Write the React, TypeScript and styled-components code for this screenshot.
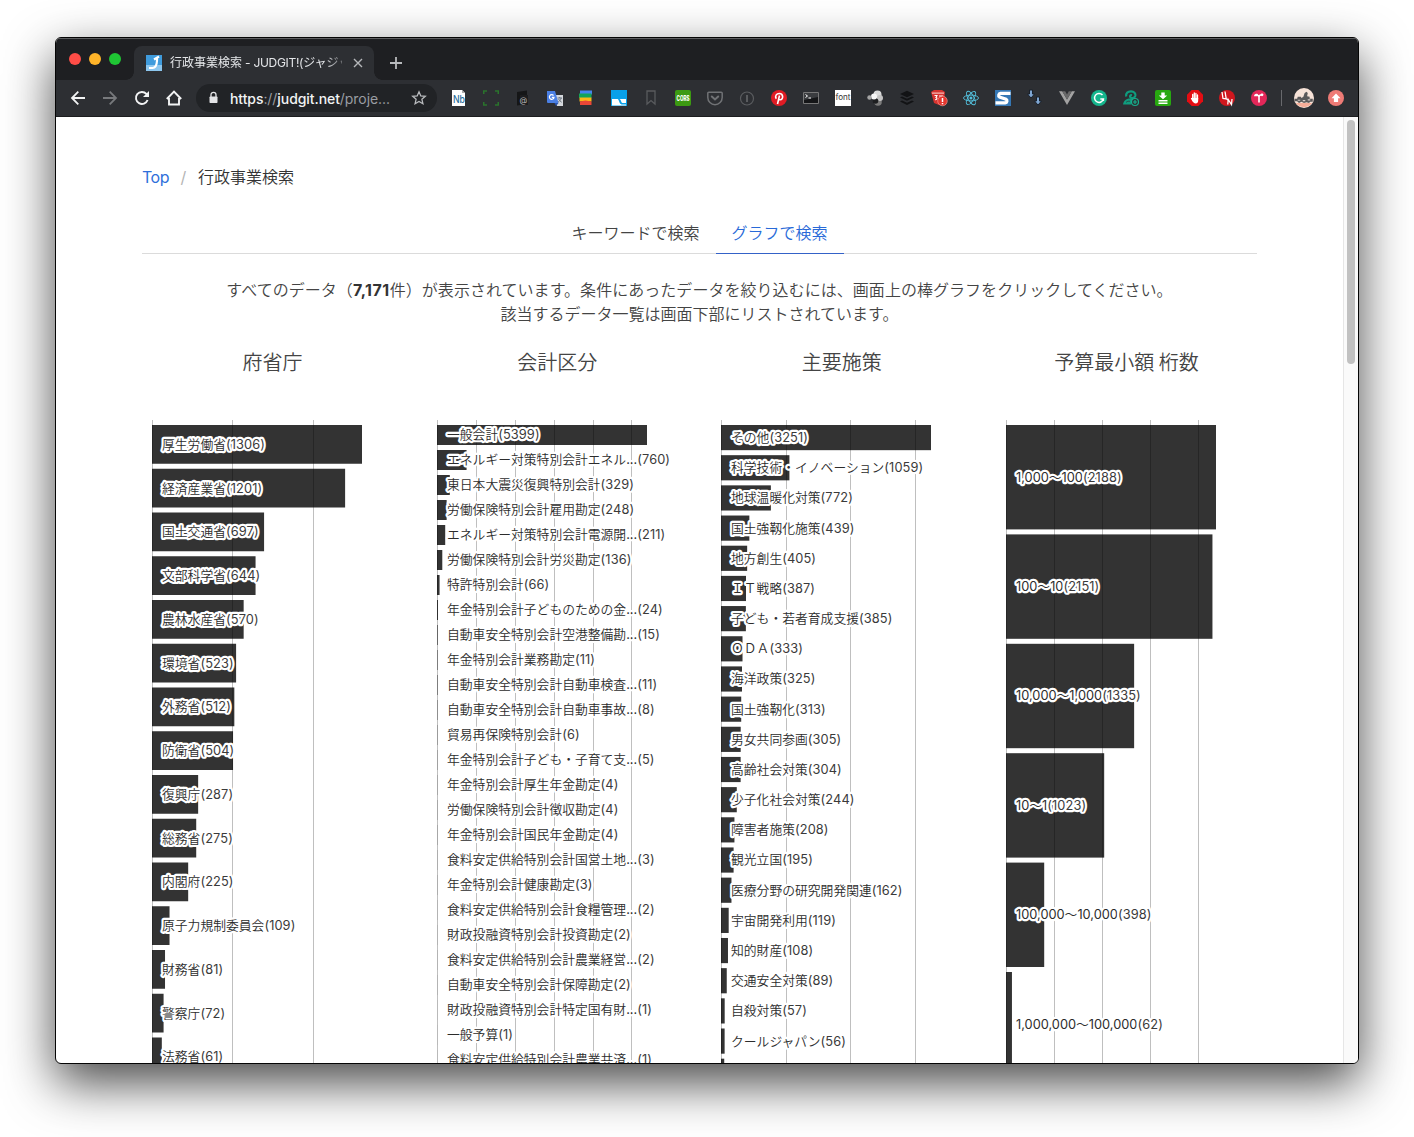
import React from "react";
import styled, { createGlobalStyle } from "styled-components";

const FONT = `Inter, "Noto Sans CJK JP DemiLight", "Noto Sans CJK JP Light", "Noto Sans CJK JP", sans-serif`;

const GlobalStyle = createGlobalStyle`
  *, *::before, *::after { box-sizing: border-box; }
  body { margin: 0; background: #fff; font-family: ${FONT}; }
`;

const Desktop = styled.div`
  width: 1414px;
  height: 1137px;
  padding: 37px 55px 73px;
  overflow: hidden;
  background: #fff;
`;

const Window = styled.div`
  height: 1027px;
  display: flex;
  flex-direction: column;
  border: 1px solid #050505;
  border-radius: 6px;
  overflow: hidden;
  background: #fff;
  box-shadow: 0 19px 50px rgba(0, 0, 0, 0.72);
`;

const TabStrip = styled.div`
  flex: none;
  height: 42px;
  display: flex;
  align-items: flex-end;
  background: #1e1f22;
  border-top: 1px solid #5d5e60;
`;

const TrafficLights = styled.div`
  display: flex;
  gap: 8px;
  padding: 0 13px 15px;
  width: 78px;
`;

const Light = styled.span<{ $color: string }>`
  width: 12px;
  height: 12px;
  border-radius: 50%;
  background: ${(p) => p.$color};
`;

const BrowserTab = styled.div`
  position: relative;
  width: 240px;
  height: 34px;
  display: flex;
  align-items: center;
  padding: 0 8px 0 12px;
  border-radius: 8px 8px 0 0;
  background: #2d2f33;
  &::before,
  &::after {
    content: "";
    position: absolute;
    bottom: 0;
    width: 8px;
    height: 8px;
  }
  &::before {
    left: -8px;
    background: radial-gradient(circle at 0 0, transparent 7.5px, #2d2f33 8px);
  }
  &::after {
    right: -8px;
    background: radial-gradient(circle at 100% 0, transparent 7.5px, #2d2f33 8px);
  }
`;

const TabTitle = styled.span`
  flex: 1;
  margin: 0 8px;
  overflow: hidden;
  white-space: nowrap;
  font-family: Inter, "Noto Sans CJK JP", sans-serif;
  font-size: 12px;
  line-height: 18px;
  color: #e4e6e9;
  mask-image: linear-gradient(to right, #000 155px, transparent 182px);
  span {
    letter-spacing: -0.3px;
  }
`;

const NewTab = styled.span`
  display: flex;
  padding: 0 0 10px 15px;
`;

const Toolbar = styled.div`
  flex: none;
  height: 37px;
  display: flex;
  align-items: center;
  padding: 0 14px;
  background: #2d2f33;
  border-bottom: 1px solid #1c1d1f;
`;

const NavButtons = styled.div`
  display: flex;
  gap: 16px;
`;

const AddressBar = styled.div`
  width: 241px;
  height: 28px;
  margin-left: 14px;
  padding: 0 10px 0 12px;
  display: flex;
  align-items: center;
  border-radius: 14px;
  background: #212326;
`;

const Url = styled.span`
  flex: 1;
  margin-left: 11px;
  font-size: 14px;
  letter-spacing: -0.07px;
  white-space: nowrap;
  color: #9a9da2;
  b {
    font-weight: 500;
    color: #f1f3f4;
  }
`;

const Extensions = styled.div`
  display: flex;
  gap: 16px;
  margin-left: 14px;
`;

const Divider = styled.span`
  width: 1px;
  height: 16px;
  margin: 0 12px 0 14px;
  background: #68696d;
`;

const Update = styled.span`
  display: flex;
  margin-left: 14px;
`;

const Viewport = styled.div`
  flex: 1;
  min-height: 0;
  display: flex;
`;

const Page = styled.main`
  flex: 1;
  overflow: hidden;
  padding: 48px 86px 0;
  color: #444;
  font-size: 16px;
  line-height: 24px;
`;

const Scrollbar = styled.div`
  width: 15px;
  padding: 3px 3px;
  background: #fafafa;
  border-left: 1px solid #e6e6e6;
`;

const Thumb = styled.div`
  height: 244px;
  width: 8px;
  border-radius: 4px;
  background: #c1c1c1;
`;

const Breadcrumb = styled.nav`
  display: flex;
  height: 24px;
  color: #333;
  a {
    color: #2f6fda;
    text-decoration: none;
    letter-spacing: -0.5px;
  }
  i {
    width: 29px;
    text-align: center;
    font-style: normal;
    color: #b5b5b5;
  }
`;

const Tabs = styled.div`
  display: flex;
  justify-content: center;
  width: 1115px;
  margin-top: 24px;
  box-shadow: inset 0 -1px #dbdbdb;
`;

const PageTab = styled.a<{ $active?: boolean }>`
  height: 41px;
  padding: 8px 16px;
  color: ${(p) => (p.$active ? "#2869d8" : "#444")};
  border-bottom: 1px solid ${(p) => (p.$active ? "#3462c8" : "transparent")};
`;

const Lead = styled.p`
  width: 1115px;
  margin: 24px 0 0;
  text-align: center;
  b {
    color: #333;
    letter-spacing: 0.5px;
  }
`;

const Nowrap = styled.span`
  letter-spacing: 0.04px;
`;

const Charts = styled.div`
  display: grid;
  grid-template-columns: repeat(4, 260px);
  column-gap: 24.67px;
  margin-top: 25px;
`;

const ChartTitle = styled.h2`
  margin: 0 0 45px;
  padding-left: 1px;
  font-size: 20px;
  line-height: 24px;
  font-weight: 400;
  text-align: center;
  word-spacing: -1px;
`;

const Plot = styled.svg`
  display: block;
  overflow: visible;
`;

const BarLabel = styled.text`
  font-family: ${FONT};
  font-size: 12.8px;
  fill: #2c2c2c;
  stroke: #fff;
  stroke-width: 4.4px;
  stroke-linejoin: round;
  paint-order: stroke fill;
`;

const Count = styled.tspan`
  fill: #3a3a3a;
  letter-spacing: 0.1px;
`;

type Row = [string, number];

interface ChartData {
  title: string;
  pitch: number;
  tick: number;
  rows: Row[];
}

const CHARTS: ChartData[] = [
  {
    title: "府省庁",
    pitch: 43.75,
    tick: 500,
    rows: [
      ["厚生労働省", 1306], ["経済産業省", 1201], ["国土交通省", 697], ["文部科学省", 644],
      ["農林水産省", 570], ["環境省", 523], ["外務省", 512], ["防衛省", 504],
      ["復興庁", 287], ["総務省", 275], ["内閣府", 225], ["原子力規制委員会", 109],
      ["財務省", 81], ["警察庁", 72], ["法務省", 61],
    ],
  },
  {
    title: "会計区分",
    pitch: 25,
    tick: 1000,
    rows: [
      ["一般会計", 5399], ["エネルギー対策特別会計エネル...", 760], ["東日本大震災復興特別会計", 329],
      ["労働保険特別会計雇用勘定", 248], ["エネルギー対策特別会計電源開...", 211],
      ["労働保険特別会計労災勘定", 136], ["特許特別会計", 66], ["年金特別会計子どものための金...", 24],
      ["自動車安全特別会計空港整備勘...", 15], ["年金特別会計業務勘定", 11],
      ["自動車安全特別会計自動車検査...", 11], ["自動車安全特別会計自動車事故...", 8],
      ["貿易再保険特別会計", 6], ["年金特別会計子ども・子育て支...", 5], ["年金特別会計厚生年金勘定", 4],
      ["労働保険特別会計徴収勘定", 4], ["年金特別会計国民年金勘定", 4],
      ["食料安定供給特別会計国営土地...", 3], ["年金特別会計健康勘定", 3],
      ["食料安定供給特別会計食糧管理...", 2], ["財政投融資特別会計投資勘定", 2],
      ["食料安定供給特別会計農業経営...", 2], ["自動車安全特別会計保障勘定", 2],
      ["財政投融資特別会計特定国有財...", 1], ["一般予算", 1], ["食料安定供給特別会計農業共済...", 1],
    ],
  },
  {
    title: "主要施策",
    pitch: 30.175,
    tick: 1000,
    rows: [
      ["その他", 3251], ["科学技術・イノベーション", 1059], ["地球温暖化対策", 772],
      ["国土強靱化施策", 439], ["地方創生", 405], ["ＩＴ戦略", 387], ["子ども・若者育成支援", 385],
      ["ＯＤＡ", 333], ["海洋政策", 325], ["国土強靭化", 313], ["男女共同参画", 305],
      ["高齢社会対策", 304], ["少子化社会対策", 244], ["障害者施策", 208], ["観光立国", 195],
      ["医療分野の研究開発関連", 162], ["宇宙開発利用", 119], ["知的財産", 108],
      ["交通安全対策", 89], ["自殺対策", 57], ["クールジャパン", 56], ["", 50],
    ],
  },
  {
    title: "予算最小額 桁数",
    pitch: 109.4,
    tick: 500,
    rows: [
      ["1,000〜100", 2188], ["100〜10", 2151], ["10,000〜1,000", 1335],
      ["10〜1", 1023], ["100,000〜10,000", 398], ["1,000,000〜100,000", 62],
    ],
  },
];

const PLOT_WIDTH = 210;
const BAR_GAP = 5;

function BarChart({ title, pitch, tick, rows }: ChartData) {
  const max = rows[0][1];
  const barHeight = pitch - BAR_GAP;
  const ticks: number[] = [];
  for (let v = 0; v <= max; v += tick) ticks.push((v / max) * PLOT_WIDTH);
  return (
    <section>
      <ChartTitle>{title}</ChartTitle>
      <Plot width="260" height="660">
        <g transform="translate(10,5)">
          {rows.map(([, value], i) => (
            <rect key={i} y={i * pitch} width={(value / max) * PLOT_WIDTH} height={barHeight} fill="#333" />
          ))}
          {ticks.map((x) => (
            <path key={x} d={`M${Math.round(x) + 0.5} -5V650`} stroke="#000" strokeOpacity="0.25" />
          ))}
          {rows.map(([name, value], i) =>
            name ? (
              <BarLabel key={i} x="10" y={i * pitch + barHeight / 2 + 4.45}>
                {name}
                <Count>{`(${value})`}</Count>
              </BarLabel>
            ) : null
          )}
        </g>
      </Plot>
    </section>
  );
}

const IconSvg = styled.svg`
  flex: none;
  overflow: visible;
`;

function Icon({ size = 16, children }: { size?: number; children: React.ReactNode }) {
  return (
    <IconSvg width={size} height={size} viewBox="0 0 16 16" fill="none">
      {children}
    </IconSvg>
  );
}

const GlyphText = styled.text`
  font-family: ${FONT};
`;

function Favicon() {
  return (
    <Icon>
      <path d="M0 0h16v16H0z" fill="#3f9bdc" />
      <path d="M0 10h16v6H0z" fill="#8cc6ee" />
      <path d="M3 13h3.500c3 0 4.300-2.500 4.500-7.500V2.500M13 1.500 8 4.500" stroke="#fff" strokeWidth="2.200" />
    </Icon>
  );
}

function ExtensionIcons() {
  return (
    <Extensions>
      <Icon>
        <path d="M1 0h10l3 3v13H1z" fill="#fff" />
        <path d="M11 0v3h3" fill="#aaa" />
        <GlyphText x="2" y="13" fontSize="10.500" fontWeight="500" textLength="12" lengthAdjust="spacingAndGlyphs" fill="#2b6f9c">Nb</GlyphText>
      </Icon>
      <Icon>
        <path d="M.75 4V1H4M12 1h3.250v3M.75 12v3H4M12 15h3.250v-3" stroke="#2a742c" strokeWidth="1.500" />
      </Icon>
      <Icon>
        <path d="m2 2 10-1.500V14l-10 1.500z" fill="#151617" />
        <path d="M5 5h8v10H5z" fill="#1c1d1f" />
        <GlyphText x="4.500" y="13" fontSize="8" fill="#b5b5b5">@</GlyphText>
      </Icon>
      <Icon>
        <path d="M7 5h9v11h-6z" fill="#d4d8dd" />
        <path d="M0 1h8l3.500 12H1a1 1 0 0 1-1-1z" fill="#4a7fe4" />
        <path d="m7.500 13 4 0-2.500 3z" fill="#2853b0" />
        <path d="M10.500 8H15m-2.300-1v1m1.500 0c-.5 2-2 3.500-3 4m.5-3c.5 1.500 2 2.700 3 3.200" stroke="#6b7580" />
        <path d="M6.500 5.500A2.300 2.300 0 1 0 7 7.300H4.800" stroke="#fff" strokeWidth="1.200" />
      </Icon>
      <Icon>
        <path d="M1 .5h12v4H1z" fill="#4585ee" />
        <path d="M0 3.500h12.500v4.500H0z" fill="#12a45b" />
        <path d="M.5 7.500h12v4H.5z" fill="#fab818" />
        <path d="M1 11.500l5.500-1 6 1v3.500H1z" fill="#ea4637" />
      </Icon>
      <Icon>
        <path d="M0 0h16v16H0z" fill="#08a0e9" />
        <path d="M1 9h5.500c1.500 0 1.500 5 4 5.500h4.500V15.500H1zM8.500 9H15v4h-3.500c-1.500 0-1-3-3-4z" fill="#fff" />
      </Icon>
      <Icon>
        <path d="M4 1h8v13l-4-3.500L4 14z" stroke="#595b5e" strokeWidth="1.300" />
      </Icon>
      <Icon>
        <rect width="16" height="16" rx="2" fill="#3c9a12" />
        <GlyphText x="1.500" y="10.500" fontSize="7" fontWeight="800" textLength="13" lengthAdjust="spacingAndGlyphs" fill="#fff">CORS</GlyphText>
      </Icon>
      <Icon>
        <path d="M1.800 2.200h12.400a1 1 0 0 1 1 1v4.300a7.200 7.200 0 0 1-14.400 0V3.200a1 1 0 0 1 1-1z" stroke="#707275" strokeWidth="1.500" />
        <path d="m4.800 6.500 3.200 3 3.200-3" stroke="#707275" strokeWidth="2" strokeLinecap="round" />
      </Icon>
      <Icon>
        <circle cx="8" cy="8.500" r="6.500" stroke="#5a5c5f" strokeWidth="1.200" />
        <path d="M8 5v7" stroke="#5a5c5f" strokeWidth="2" />
      </Icon>
      <Icon>
        <circle cx="8" cy="8" r="8" fill="#e01b24" />
        <path d="M5.300 8.800C3.500 6 5.500 3.500 8.300 3.500c4.500 0 4 6.300 1 6.300-1.400 0-1.800-1-1.800-1M8.500 5.500 6.500 14" stroke="#fff" strokeWidth="1.600" />
      </Icon>
      <Icon>
        <path d="M.5 2.500h15v11H.5z" fill="#151618" stroke="#777" />
        <path d="M1 3h14v4L1 10z" fill="#3b3d40" />
        <path d="m2.500 4.500 2 1.500-2 1.500M5.500 8h2.500" stroke="#fff" />
      </Icon>
      <Icon>
        <path d="M0 0h16v16H0z" fill="#fff" />
        <GlyphText x=".5" y="9.500" fontSize="8" textLength="15" lengthAdjust="spacingAndGlyphs" fill="#333">font</GlyphText>
      </Icon>
      <Icon>
        <circle cx="10.500" cy="4.500" r="4" fill="#d9d9d9" />
        <circle cx="11" cy="12" r="3.800" fill="#7b7b7b" />
        <circle cx="13" cy="8" r="3" fill="#c4c4c4" />
        <circle cx="8.500" cy="11" r="2.800" fill="#1d1e20" />
        <circle cx="7" cy="6.500" r="3" fill="#f6f6f6" />
        <circle cx="2.500" cy="7.500" r="2.200" fill="#a4a4a4" />
      </Icon>
      <Icon>
        <path d="m8 .8 7 3.200-7 3.200L1 4zM1 7.500l2-1 5 2.200 5-2.200 2 1-7 3.300zM1 11.500l2-1 5 2.200 5-2.200 2 1-7 3.500z" fill="#121315" />
      </Icon>
      <Icon>
        <path d="M0 2 3 0h8l3 2-1 9-5 4-5-2z" fill="#d63430" />
        <path d="M1 3.200h12" stroke="#f4b9b4" strokeWidth="1.200" />
        <path d="M3.500 5.500h2.500l-1 2c1.500 0 1 2.500-1 2.300M8 6h3L9 8" stroke="#fff" strokeWidth="1.100" />
        <circle cx="11.500" cy="11" r="4.800" fill="#e4372f" stroke="#f8b6b0" strokeWidth=".5" />
        <path d="M11.500 8v4m0 1v1.300" stroke="#fff" strokeWidth="1.500" />
      </Icon>
      <Icon>
        <g stroke="#53c1de" strokeWidth=".9">
          <ellipse cx="8" cy="8" rx="7.500" ry="2.900" />
          <ellipse cx="8" cy="8" rx="7.500" ry="2.900" transform="rotate(60 8 8)" />
          <ellipse cx="8" cy="8" rx="7.500" ry="2.900" transform="rotate(120 8 8)" />
        </g>
        <circle cx="8" cy="8" r="1.500" fill="#53c1de" />
      </Icon>
      <Icon>
        <path d="M0 0h16v16H0z" fill="#3577b4" />
        <path d="M15.500 3.400H5.500a2 2 0 0 0-1 3.600l6.500 2.200a2 2 0 0 1-.8 3.700H.5" stroke="#fff" strokeWidth="3.200" />
      </Icon>
      <Icon>
        <path d="M2.500 0h3v4h2L4 8 .5 4h2zM9.500 7h3v4h2L11 15 7.500 11h2z" fill="#7fa6d2" stroke="#18202b" strokeWidth="1" />
      </Icon>
      <Icon>
        <path d="M0 1.300h3.200L8 9.600l4.800-8.300H16L8 15z" fill="#a2a2a2" />
        <path d="M3.200 1.300h3L8 4.500l1.800-3.200h3L8 9.600z" fill="#69696a" />
      </Icon>
      <Icon>
        <circle cx="8" cy="8" r="8" fill="#15b58d" />
        <path d="M11.500 5A4.500 4.500 0 1 0 12.400 9H9.300M12.400 9v2" stroke="#fff" strokeWidth="1.500" />
      </Icon>
      <Icon>
        <path d="M3.200 6.500C2.500 3 5 1.300 8 1.300s5 2 4.300 4.700C11.500 8.500 8 8.500 7.300 7.300S7.300 4.800 9 5.200" stroke="#0f9c7e" strokeWidth="2.200" />
        <path d="M0 14.500c.5-3.500 3-6 7-6h3l-2 6z" fill="#0f9c7e" />
        <path d="M3 12.500c1-1.200 2.500-1.500 4-1.200" stroke="#2d2f33" strokeWidth=".7" />
        <circle cx="12" cy="12" r="3.500" fill="#2d2f33" stroke="#16ae8c" strokeWidth="1.200" />
        <path d="M12 10v4m-2-2h4" stroke="#16ae8c" strokeWidth="1.200" />
      </Icon>
      <Icon>
        <rect width="16" height="16" rx="2" fill="#27a810" />
        <path d="M6.300 2.500h3.400v3h2.500L8 9.300 3.800 5.500h2.500zM3.500 10h9v1.500h-9zM3.500 12.500h9V14h-9z" fill="#fff" />
      </Icon>
      <Icon>
        <path d="M4.700 0h6.600L16 4.700v6.600L11.300 16H4.700L0 11.300V4.700z" fill="#e40d13" />
        <path d="M5.700 9V4.500M7.300 8V3M8.900 8V3.300M10.500 9V5M4.500 8.500 6 11" stroke="#fff" strokeWidth="1.300" strokeLinecap="round" />
        <path d="M5.200 8h6v2.500c0 2-1 3-2.500 3S6 12.500 5.200 10z" fill="#fff" />
      </Icon>
      <Icon>
        <circle cx="8" cy="8" r="8" fill="#cf171e" />
        <path d="M3 2 4 8.500l3 .3M6 1.500l1.200 7.200L10 11M8.800 14.500l.4-5 3.300 5 .5-5.500" stroke="#fff" strokeWidth="1.300" />
      </Icon>
      <Icon>
        <circle cx="8" cy="8" r="8" fill="#e32759" />
        <path d="M8 12.500V7c0-1.200-.8-1.800-2-1.800M8 7c0-1.300.8-2 2-2" stroke="#fff" strokeWidth="1.600" />
        <path d="M3 6.200c.2-2 1.700-3.200 4-2l-.5 2z" fill="#fff" />
        <circle cx="11" cy="4.800" r="1.400" fill="#fff" />
      </Icon>
    </Extensions>
  );
}

function Avatar() {
  return (
    <Icon size={20}>
      <circle cx="8" cy="8" r="8" fill="#f7e3d8" />
      <path d="M1.500 12h13a8 8 0 0 1-13 0z" fill="#f5ad99" />
      <path d="M.5 8.500h2l.5-1.500h2.500l.5 1 1.500-1 1-3 1.500-1 1 1-.5 2.500 2 .5v1.500h2.500v2.500h-2l-1 1-2-.7-2 .7-2-1-2 1-1.500-1.500h-2z" fill="#5a595a" />
      <path d="M3 9.800h2m2 .3h2m2-.6h2" stroke="#d5cdc9" strokeWidth=".9" />
    </Icon>
  );
}

export default function App() {
  return (
    <>
      <GlobalStyle />
      <Desktop>
        <Window>
          <TabStrip>
            <TrafficLights>
              <Light $color="#ff4d47" />
              <Light $color="#ffb429" />
              <Light $color="#1fc634" />
            </TrafficLights>
            <BrowserTab>
              <Favicon />
              <TabTitle>
                行政事業検索<span> - JUDGIT!(</span>ジャジッ
              </TabTitle>
              <Icon>
                <path d="m4 4 8 8m0-8-8 8" stroke="#b5b7ba" strokeWidth="1.400" />
              </Icon>
            </BrowserTab>
            <NewTab>
              <svg width="14" height="14" fill="none">
                <path d="M7 1v12M1 7h12" stroke="#b8babd" strokeWidth="1.800" />
              </svg>
            </NewTab>
          </TabStrip>
          <Toolbar>
            <NavButtons>
              <Icon>
                <path d="M15 8H2m6.300-6.300L2 8l6.300 6.300" stroke="#f2f3f4" strokeWidth="1.800" />
              </Icon>
              <Icon>
                <path d="M1 8h13M7.700 1.700 14 8l-6.300 6.300" stroke="#77797c" strokeWidth="1.800" />
              </Icon>
              <Icon>
                <path d="M13.600 10a6 6 0 1 1-1.200-6.100l1.400 1.500" stroke="#f2f3f4" strokeWidth="1.900" />
                <path d="M15 1v6H9z" fill="#f2f3f4" />
              </Icon>
              <Icon>
                <path d="M3 8v6.500h10V8M.8 9 8 1.600 15.200 9" stroke="#f2f3f4" strokeWidth="1.900" />
              </Icon>
            </NavButtons>
            <AddressBar>
              <svg width="11" height="14" viewBox="0 0 11 14" fill="none">
                <rect x="1.500" y="5.500" width="8" height="6.500" rx=".8" fill="#e3e4e6" />
                <path d="M3 6V3.800a2.500 2.500 0 0 1 5 0V6" stroke="#e3e4e6" strokeWidth="1.300" />
              </svg>
              <Url>
                <b>https</b>://<b>judgit.net</b>/proje...
              </Url>
              <Icon>
                <path d="m8 1.800 1.800 4.100 4.500.4-3.400 3 1 4.400L8 11.400l-3.900 2.300 1-4.400-3.400-3 4.500-.4z" stroke="#b9bbbe" strokeWidth="1.300" />
              </Icon>
            </AddressBar>
            <ExtensionIcons />
            <Divider />
            <Avatar />
            <Update>
              <Icon>
                <circle cx="8" cy="8" r="8" fill="#ee7b76" />
                <path d="m8 3.500 4.500 4.700h-2.400V12H5.900V8.200H3.500z" fill="#fff" />
              </Icon>
            </Update>
          </Toolbar>
          <Viewport>
            <Page>
              <Breadcrumb>
                <a>Top</a>
                <i>/</i>
                <span>行政事業検索</span>
              </Breadcrumb>
              <Tabs>
                <PageTab>キーワードで検索</PageTab>
                <PageTab $active>グラフで検索</PageTab>
              </Tabs>
              <Lead>
                <Nowrap>
                  すべてのデータ（<b>7,171</b>件）が表示されています。条件にあったデータを絞り込むには、画面上の棒グラフをクリックしてください。
                </Nowrap>
                <br />
                該当するデータ一覧は画面下部にリストされています。
              </Lead>
              <Charts>
                {CHARTS.map((chart) => (
                  <BarChart key={chart.title} {...chart} />
                ))}
              </Charts>
            </Page>
            <Scrollbar>
              <Thumb />
            </Scrollbar>
          </Viewport>
        </Window>
      </Desktop>
    </>
  );
}
